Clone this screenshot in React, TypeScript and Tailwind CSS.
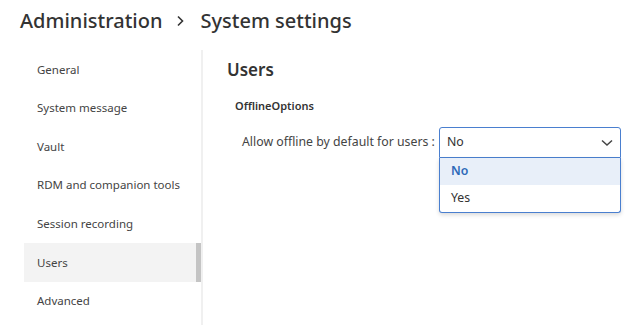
import React from "react";

const items = [
  "General",
  "System message",
  "Vault",
  "RDM and companion tools",
  "Session recording",
  "Users",
  "Advanced",
];

export default function App() {
  return (
    <div
      className="w-[640px] h-[325px] bg-white overflow-hidden text-[#333]"
      style={{ fontFamily: '"Noto Sans", "Open Sans", sans-serif' }}
    >
      <div className="h-[50px] flex items-center pl-[20px] pb-[8px] text-[20px] font-medium text-[#333] leading-none">
        <span>Administration</span>
        <svg className="ml-[14px] mr-[15px]" width="9" height="14" viewBox="0 0 9 14" fill="none">
          <path d="M2 2.5 L6.5 7 L2 11.5" stroke="#333" strokeWidth="1.6" />
        </svg>
        <span>System settings</span>
      </div>
      <div className="flex h-[275px]">
        <div className="w-[203px] shrink-0 border-r-2 border-[#f0f0f0] pl-[24px] flex flex-col">
          {items.map((it) => (
            <div
              key={it}
              className={
                "h-[38.6px] shrink-0 flex items-center pl-[13px] text-[11.5px] text-[#444] " +
                (it === "Users" ? "bg-[#f3f3f3] border-r-[5px] border-[#c4c4c4]" : "")
              }
            >
              {it}
            </div>
          ))}
        </div>
        <div className="flex-1 pl-[24px] pt-[8px]">
          <div className="text-[17px] font-semibold text-[#333] leading-[24px]">Users</div>
          <div className="mt-[16px] pl-[8px] text-[11px] font-semibold text-[#333] leading-[16px]">
            OfflineOptions
          </div>
          <div className="mt-[13px] flex items-start">
            <div className="pl-[15px] w-[212px] shrink-0 h-[30px] flex items-center text-[12.3px] whitespace-nowrap text-[#444]">
              Allow offline by default for users :
            </div>
            <div className="w-[182px] flex flex-col">
              <div className="h-[31px] border border-[#4a7fcf] rounded-t-[3px] flex items-center justify-between pl-[7px] pr-[7px] text-[12.3px] text-[#333]">
                <span>No</span>
                <svg width="12" height="8" viewBox="0 0 12 8" fill="none">
                  <path d="M1 1.5 L6 6 L11 1.5" stroke="#444" strokeWidth="1.5" />
                </svg>
              </div>
              <div className="border border-t-0 border-[#4a7fcf] rounded-b-[3px] shadow-[0_2px_4px_rgba(0,0,0,0.15)] bg-white">
                <div className="h-[27px] bg-[#e8eff9] flex items-center pl-[11px] text-[12.3px] font-semibold text-[#2d69b8]">
                  No
                </div>
                <div className="h-[27px] flex items-center pl-[11px] text-[12.3px] text-[#333]">Yes</div>
              </div>
            </div>
          </div>
        </div>
      </div>
    </div>
  );
}
